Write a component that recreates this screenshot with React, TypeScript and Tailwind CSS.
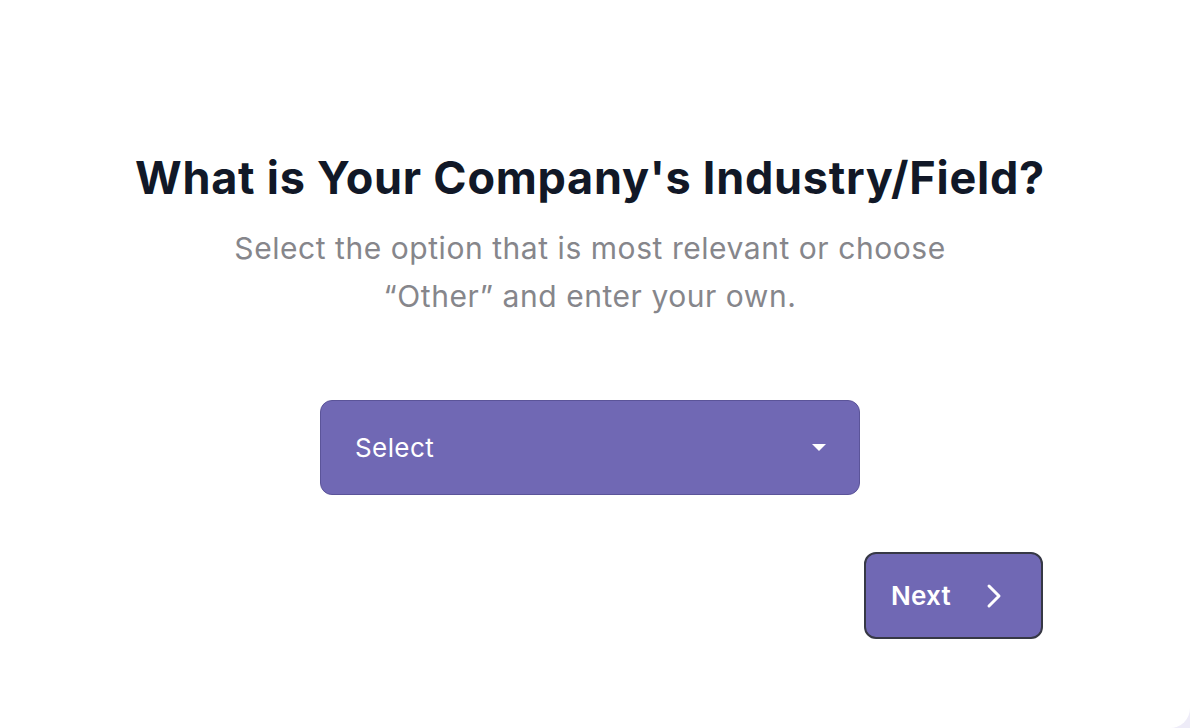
export default function App() {
  return (
    <div className="min-h-screen w-full bg-[#eeecf8]" style={{ fontFamily: 'Inter, "Noto Sans", sans-serif' }}>
      <div className="h-[728px] w-full bg-white rounded-br-[20px] pr-[10px] pt-[151px]">
        <div className="mx-auto w-[906px] flex flex-col items-center">
          <h1 className="text-[45px] leading-[54px] font-bold text-[#111827] tracking-[0.75px] whitespace-nowrap">
            What is Your Company's Industry/Field?
          </h1>
          <p className="mt-[19px] text-center text-[30px] leading-[48px] text-[#86868b] tracking-[0.55px] whitespace-nowrap">
            Select the option that is most relevant or choose
            <br />
            “Other” and enter your own.
          </p>

          <button className="mt-[80px] w-[540px] h-[95px] rounded-[12px] bg-[#7068b4] border border-[#5b5499] flex items-center justify-between pl-[34px] pr-[32px]">
            <span className="text-[26px] text-white tracking-[0.4px]">Select</span>
            <svg width="16" height="8" viewBox="0 0 16 8">
              <path d="M1 0 L15 0 L8 7 Z" fill="white" />
            </svg>
          </button>

          <div className="w-full flex justify-end mt-[57px]">
            <button className="w-[179px] h-[87px] rounded-[12px] bg-[#7068b4] border-2 border-[#363845] flex items-center pl-[25px] gap-[34px]">
              <span className="text-[26px] font-semibold text-white tracking-[0.2px]">Next</span>
              <svg width="18" height="26" viewBox="0 0 18 26" fill="none">
                <path d="M4 3 L14 13 L4 23" stroke="white" strokeWidth="3" strokeLinecap="round" strokeLinejoin="round" />
              </svg>
            </button>
          </div>
        </div>
      </div>
    </div>
  );
}
